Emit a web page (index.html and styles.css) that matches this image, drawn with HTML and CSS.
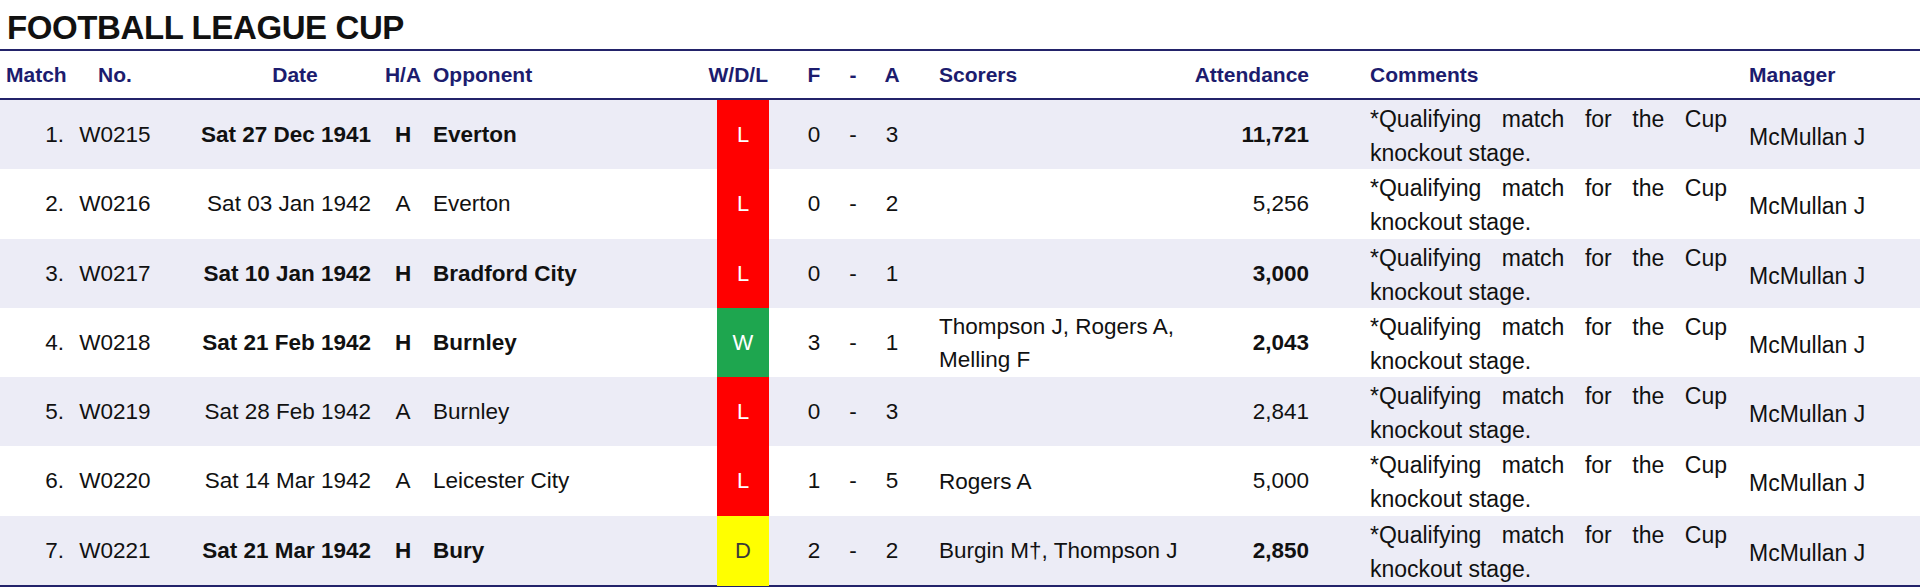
FILE: index.html
```html
<!DOCTYPE html>
<html lang="en">
<head>
<meta charset="utf-8">
<title>Football League Cup</title>
<link rel="stylesheet" href="styles.css">
</head>
<body>
<h1 class="title">FOOTBALL LEAGUE CUP</h1>
<div class="table">
  <div class="row head">
    <div class="c-match">Match</div>
    <div class="c-no">No.</div>
    <div class="c-date">Date</div>
    <div class="c-ha">H/A</div>
    <div class="c-opp">Opponent</div>
    <div class="c-res">W/D/L</div>
    <div class="c-f">F</div>
    <div class="c-dash">-</div>
    <div class="c-a">A</div>
    <div class="c-sc">Scorers</div>
    <div class="c-att"><span>Attendance</span></div>
    <div class="c-com">Comments</div>
    <div class="c-man">Manager</div>
  </div>

  <div class="row alt home">
    <div class="c-match">1.</div><div class="c-no">W0215</div>
    <div class="c-date">Sat 27 Dec 1941</div><div class="c-ha">H</div><div class="c-opp">Everton</div>
    <div class="c-res"><span class="box loss">L</span></div>
    <div class="c-f">0</div><div class="c-dash">-</div><div class="c-a">3</div>
    <div class="c-sc"></div><div class="c-att">11,721</div>
    <div class="c-com">*Qualifying match for the Cup knockout stage.</div><div class="c-man">McMullan J</div>
  </div>

  <div class="row">
    <div class="c-match">2.</div><div class="c-no">W0216</div>
    <div class="c-date">Sat 03 Jan 1942</div><div class="c-ha">A</div><div class="c-opp">Everton</div>
    <div class="c-res"><span class="box loss">L</span></div>
    <div class="c-f">0</div><div class="c-dash">-</div><div class="c-a">2</div>
    <div class="c-sc"></div><div class="c-att">5,256</div>
    <div class="c-com">*Qualifying match for the Cup knockout stage.</div><div class="c-man">McMullan J</div>
  </div>

  <div class="row alt home">
    <div class="c-match">3.</div><div class="c-no">W0217</div>
    <div class="c-date">Sat 10 Jan 1942</div><div class="c-ha">H</div><div class="c-opp">Bradford City</div>
    <div class="c-res"><span class="box loss">L</span></div>
    <div class="c-f">0</div><div class="c-dash">-</div><div class="c-a">1</div>
    <div class="c-sc"></div><div class="c-att">3,000</div>
    <div class="c-com">*Qualifying match for the Cup knockout stage.</div><div class="c-man">McMullan J</div>
  </div>

  <div class="row home">
    <div class="c-match">4.</div><div class="c-no">W0218</div>
    <div class="c-date">Sat 21 Feb 1942</div><div class="c-ha">H</div><div class="c-opp">Burnley</div>
    <div class="c-res"><span class="box win">W</span></div>
    <div class="c-f">3</div><div class="c-dash">-</div><div class="c-a">1</div>
    <div class="c-sc">Thompson J, Rogers A, Melling F</div><div class="c-att">2,043</div>
    <div class="c-com">*Qualifying match for the Cup knockout stage.</div><div class="c-man">McMullan J</div>
  </div>

  <div class="row alt">
    <div class="c-match">5.</div><div class="c-no">W0219</div>
    <div class="c-date">Sat 28 Feb 1942</div><div class="c-ha">A</div><div class="c-opp">Burnley</div>
    <div class="c-res"><span class="box loss">L</span></div>
    <div class="c-f">0</div><div class="c-dash">-</div><div class="c-a">3</div>
    <div class="c-sc"></div><div class="c-att">2,841</div>
    <div class="c-com">*Qualifying match for the Cup knockout stage.</div><div class="c-man">McMullan J</div>
  </div>

  <div class="row">
    <div class="c-match">6.</div><div class="c-no">W0220</div>
    <div class="c-date">Sat 14 Mar 1942</div><div class="c-ha">A</div><div class="c-opp">Leicester City</div>
    <div class="c-res"><span class="box loss">L</span></div>
    <div class="c-f">1</div><div class="c-dash">-</div><div class="c-a">5</div>
    <div class="c-sc">Rogers A</div><div class="c-att">5,000</div>
    <div class="c-com">*Qualifying match for the Cup knockout stage.</div><div class="c-man">McMullan J</div>
  </div>

  <div class="row alt home last">
    <div class="c-match">7.</div><div class="c-no">W0221</div>
    <div class="c-date">Sat 21 Mar 1942</div><div class="c-ha">H</div><div class="c-opp">Bury</div>
    <div class="c-res"><span class="box draw">D</span></div>
    <div class="c-f">2</div><div class="c-dash">-</div><div class="c-a">2</div>
    <div class="c-sc">Burgin M†, Thompson J</div><div class="c-att">2,850</div>
    <div class="c-com">*Qualifying match for the Cup knockout stage.</div><div class="c-man">McMullan J</div>
  </div>
</div>
</body>
</html>
```

FILE: styles.css
```css
html, body {
  margin: 0;
  padding: 0;
  background: #ffffff;
}

body {
  width: 1920px;
  font-family: "Liberation Sans", Arial, sans-serif;
  color: #111111;
}

.title {
  margin: 0;
  padding: 6px 0 0 7px;
  height: 43px;
  line-height: 43px;
  font-size: 33px;
  font-weight: bold;
  color: #111111;
  letter-spacing: -0.4px;
}

.table {
  border-top: 2px solid #23236a;
  border-bottom: 2px solid #23236a;
}

.row {
  display: grid;
  grid-template-columns: 70px 90px 218px 50px 272px 90px 48px 30px 48px 284px 115px 430px 175px;
  align-items: center;
  height: 69.3px;
  font-size: 22.5px;
  white-space: nowrap;
}

.row.alt {
  background: #ececf6;
}

.row.head {
  height: 47px;
  border-bottom: 2px solid #23236a;
  font-size: 21px;
  font-weight: bold;
  color: #1c1c6e;
  background: #ffffff;
}

.c-match { text-align: right; padding-right: 6px; }
.c-no { text-align: center; }
.c-date { text-align: right; padding-right: 7px; }
.c-ha { text-align: center; }
.c-opp { padding-left: 5px; }
.c-res { align-self: stretch; display: flex; justify-content: flex-end; padding-right: 21px; }
.c-f, .c-dash, .c-a { text-align: center; }
.c-sc { padding-left: 23px; padding-right: 20px; white-space: normal; line-height: 33px; }
.c-att { text-align: right; padding-right: 6px; }
.c-com {
  padding-left: 55px;
  padding-right: 18px;
  white-space: normal;
  text-align: justify;
  font-size: 23px;
  line-height: 34px;
  padding-top: 2px;
}
.c-man { padding-left: 4px; font-size: 23px; padding-top: 5px; }

.head .c-match { text-align: left; padding-left: 6px; padding-right: 0; }
.head .c-date { text-align: center; padding-left: 52px; padding-right: 0; }
.head .c-res { align-self: center; display: block; text-align: right; padding-right: 22px; }
.head .c-sc { padding-left: 23px; }
.head .c-att { display: flex; justify-content: flex-end; }
.head .c-com { font-size: 21px; line-height: normal; padding-top: 0; text-align: left; }
.head .c-man { font-size: 21px; padding-top: 0; }

.home .c-date,
.home .c-ha,
.home .c-opp,
.home .c-att {
  font-weight: bold;
}

.box {
  width: 52px;
  display: flex;
  align-items: center;
  justify-content: center;
  color: #ffffff;
  font-size: 22px;
}

.box.loss { background: #ff0000; }
.box.win { background: #1ea64f; }
.box.draw { background: #ffff00; color: #3a3a3a; }
```
